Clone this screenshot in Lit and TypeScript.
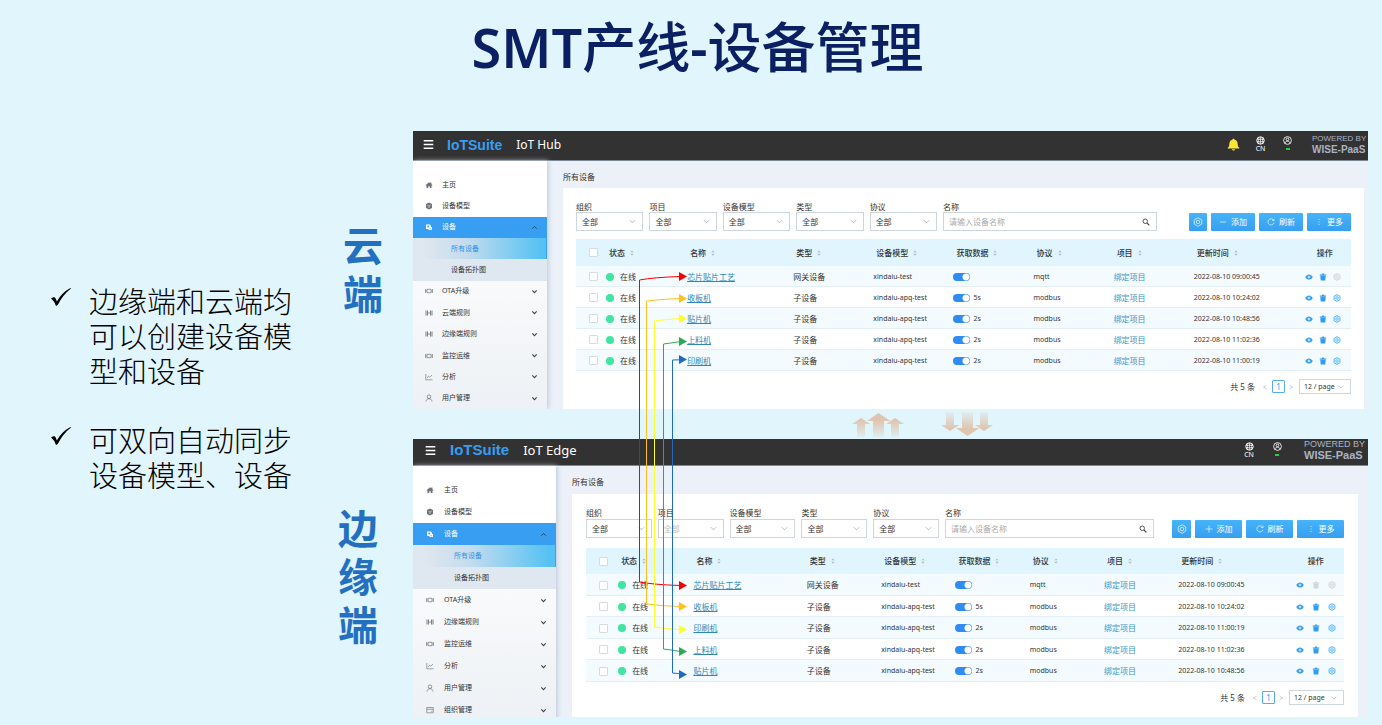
import { LitElement, html, css, svg, nothing } from "lit";
import { customElement, property } from "lit/decorators.js";
import { classMap } from "lit/directives/class-map.js";

interface Device {
  name: string;
  type: string;
  model: string;
  interval: string;
  protocol: string;
  updated: string;
}

interface MenuItem {
  text: string;
  icon: string;
  kind?: "plain" | "active" | "selected" | "sub";
}

const gateway: Device = { name: "芯片贴片工艺", type: "网关设备", model: "xindaiu-test", interval: "", protocol: "mqtt", updated: "2022-08-10 09:00:45" };
const child = (name: string, interval: string, time: string): Device => ({
  name, type: "子设备", model: "xindaiu-apq-test", interval, protocol: "modbus", updated: `2022-08-10 ${time}`,
});

const DEVICES: Record<string, Device[]> = {
  hub: [gateway, child("收板机", "5s", "10:24:02"), child("贴片机", "2s", "10:48:56"), child("上料机", "2s", "11:02:36"), child("印刷机", "2s", "11:00:19")],
  edge: [gateway, child("收板机", "5s", "10:24:02"), child("印刷机", "2s", "11:00:19"), child("上料机", "2s", "11:02:36"), child("贴片机", "2s", "10:48:56")],
};

const TOP_MENU: MenuItem[] = [
  { text: "主页", icon: "home", kind: "plain" },
  { text: "设备模型", icon: "cube", kind: "plain" },
  { text: "设备", icon: "device", kind: "active" },
  { text: "所有设备", icon: "", kind: "selected" },
  { text: "设备拓扑图", icon: "", kind: "sub" },
  { text: "OTA升级", icon: "ota" },
];

const MENUS: Record<string, MenuItem[]> = {
  hub: [...TOP_MENU, { text: "云端规则", icon: "rule" }, { text: "边缘端规则", icon: "rule" }, { text: "监控运维", icon: "ota" }, { text: "分析", icon: "chart" }, { text: "用户管理", icon: "user" }],
  edge: [...TOP_MENU, { text: "边缘端规则", icon: "rule" }, { text: "监控运维", icon: "ota" }, { text: "分析", icon: "chart" }, { text: "用户管理", icon: "user" }, { text: "组织管理", icon: "card" }],
};

const FILTERS = ["组织", "项目", "设备模型", "类型", "协议"];
const COLUMNS = ["状态", "名称", "类型", "设备模型", "获取数据", "协议", "项目", "更新时间"];

const HEXAGON = "M8 1.2 14 4.6V11.4L8 14.8 2 11.4V4.6Z";

const SHAPES: Record<string, unknown> = {
  home: svg`<path fill="currentColor" d="M1 8.6 8 2.4l2.6 2.3V2.8h2.2v3.8L15 8.6l-1 1-1-.9V14H9.6v-3.6H6.6V14H3V8.7l-1 .9z"/>`,
  cube: svg`<path fill="currentColor" d="M8 1l6 3.200v7.600L8 15l-6-3.200V4.200z"/><path d="M4.600 6.200 8 8l3.400-1.800M8 8v4" stroke="#fff" stroke-width="1" fill="none"/>`,
  device: svg`<path fill="currentColor" d="M2 3h8l2 3v2h2v6H7v-2H2z"/><circle cx="6.4" cy="7" r="2" fill="#379ef1"/><path d="M9 11.5h3.6" stroke="#379ef1" stroke-width="1.4"/>`,
  ota: svg`<path d="M1.2 4v8M14.8 4v8M4 4.6h8v6.8H4z" stroke="currentColor" stroke-width="1.4" fill="none"/><path d="M1.2 8H4M12 8h2.8" stroke="currentColor"/>`,
  rule: svg`<path d="M2 3v10M5 3v10M11 3v10M14 3v10" stroke="currentColor" stroke-width="1.8"/><path d="M5 8h6" stroke="currentColor" stroke-width="1.4"/>`,
  chart: svg`<path d="M1.6 2v11.6H15M4 10l3-3.6 2.6 2L14 4" stroke="currentColor" stroke-width="1.3" fill="none"/>`,
  user: svg`<circle cx="8" cy="5.4" r="3.6" stroke="currentColor" stroke-width="1.4" fill="none"/><path d="M2 15c.4-3.6 2.6-5.6 6-5.6s5.6 2 6 5.6" stroke="currentColor" stroke-width="1.4" fill="none"/>`,
  card: svg`<path d="M1.5 3h13v10.5h-13zM1.5 6.5h13M10.5 10.5h2.5" stroke="currentColor" stroke-width="1.3" fill="none"/>`,
  down: svg`<path d="M3 5.5 8 10.5l5-5" stroke="currentColor" stroke-width="2.6" fill="none"/>`,
  up: svg`<path d="M3 10.5 8 5.5l5 5" stroke="currentColor" stroke-width="2.2" fill="none"/>`,
  thinDown: svg`<path d="M2 5l6 6 6-6" stroke="currentColor" stroke-width="1.7" fill="none"/>`,
  left: svg`<path d="M12 3 4 8l8 5" stroke="currentColor" stroke-width="1.6" fill="none"/>`,
  right: svg`<path d="M4 3l8 5-8 5" stroke="currentColor" stroke-width="1.6" fill="none"/>`,
  search: svg`<circle cx="6.5" cy="6.5" r="4.5" stroke="currentColor" stroke-width="1.8" fill="none"/><path d="M10 10l4.6 4.6" stroke="currentColor" stroke-width="2.2"/>`,
  gear: svg`<path d=${HEXAGON} stroke="currentColor" stroke-width="1.3" fill="none"/><circle cx="8" cy="8" r="2.8" stroke="currentColor" stroke-width="1.3" fill="none"/>`,
  gearSoft: svg`<path d=${HEXAGON} stroke="currentColor" stroke-width="2" fill="currentColor" fill-opacity=".25"/><circle cx="8" cy="8" r="2.6" stroke="currentColor" stroke-width="1.6" fill="none"/>`,
  minus: svg`<path d="M2 8h12" stroke="currentColor" stroke-width="1.6"/>`,
  plus: svg`<path d="M1 8h14M8 1v14" stroke="currentColor" stroke-width="1.5"/>`,
  reload: svg`<path d="M13.4 4.6A6.2 6.2 0 1 0 14 9.6M14 1.6v3.6h-3.6" stroke="currentColor" stroke-width="1.5" fill="none"/>`,
  dots: svg`<path d="M8 2v2M8 7v2M8 12v2" stroke="currentColor" stroke-width="1.6"/>`,
  eye: svg`<path fill="currentColor" d="M.5 8C2.5 4.4 5 2.8 8 2.8S13.5 4.4 15.5 8C13.5 11.6 11 13.2 8 13.2S2.5 11.600.5 8z"/><circle cx="8" cy="8" r="2.6" fill="#fff"/><circle cx="8" cy="8" r="1.4" fill="currentColor"/>`,
  trash: svg`<path fill="currentColor" d="M1.5 3h4l1-2h3l1 2h4v2h-13zM2.6 5.6h10.8L12.6 15H3.4z"/>`,
  sort: svg`<path fill="currentColor" d="M8 1l4.5 5h-9zM8 15l4.5-5h-9z"/>`,
  menu: svg`<path d="M1 2.5h14M1 8h14M1 13.5h14" stroke="currentColor" stroke-width="2.2"/>`,
  bell: svg`<path fill="currentColor" d="M8 .8c.9 0 1.3.5 1.4 1.2 2.6.6 3.7 2.5 3.7 5 0 2.6.5 3.6 2 5v.9H.9V12c1.5-1.4 2-2.4 2-5 0-2.5 1.1-4.4 3.7-5C6.7 1.3 7.1.8 8 .8zM6 13.7h4c-.2 1.1-1 1.7-2 1.7s-1.8-.6-2-1.7z"/>`,
  globe: svg`<circle cx="8" cy="8" r="6.6" stroke="currentColor" stroke-width="1.7" fill="none"/><path d="M1.5 6h13M1.5 10h13M8 1.5v13M5.5 2.5c-1.6 3.5-1.6 7.5 0 11M10.5 2.5c1.6 3.5 1.6 7.5 0 11" stroke="currentColor" stroke-width="1.2" fill="none"/>`,
  person: svg`<circle cx="8" cy="8" r="6.9" stroke="currentColor" stroke-width="1.5" fill="none"/><circle cx="8" cy="6" r="2.3" stroke="currentColor" stroke-width="1.5" fill="none"/><path d="M3.6 13c.5-2.6 2-3.9 4.4-3.9s3.9 1.3 4.4 3.9" stroke="currentColor" stroke-width="1.5" fill="none"/>`,
};

const icon = (name: string, cls = "") => html`<svg class="icon ${cls}" viewBox="0 0 16 16" aria-hidden="true">${SHAPES[name] ?? nothing}</svg>`;

@customElement("device-panel")
export class DevicePanel extends LitElement {
  @property({ reflect: true }) variant = "hub";

  static styles = css`
    :host {
      --side: 134px;
      --bar: 30px;
      --bar-lift: 2px;
      --crumb: 27px;
      --card-left: 16px;
      --card-right: 4px;
      --pad: 13px;
      --filters: 361px;
      --label: 10px;
      --table-gap: 8px;
      --head: 27px;
      --row-odd: 21px;
      --bottom: 15px;
      --button: 44px;
      --small-button: 18px;
      --search-gap: 32px;
      --op-gap: 6px;
      display: block;
      overflow: hidden;
      background: #ecf1f9;
      color: #333;
      font: 8px/10px "Noto Sans", "Noto Sans CJK SC", sans-serif;
    }
    :host([variant="edge"]) {
      --side: 143px;
      --bar: 27px;
      --bar-lift: 4px;
      --crumb: 28px;
      --card-right: 10px;
      --pad: 14px;
      --filters: 353px;
      --label: 11px;
      --table-gap: 10px;
      --head: 26px;
      --row-odd: 22px;
      --bottom: 12px;
      --button: 47px;
      --small-button: 19px;
      --search-gap: 18px;
      --op-gap: 8px;
    }
    * { box-sizing: border-box; }
    a { color: inherit; text-decoration: none; }
    button, input, select { font: inherit; color: inherit; margin: 0; padding: 0; }
    .icon { display: block; width: 8px; height: 8px; flex: none; }

    .bar {
      display: flex;
      align-items: center;
      height: var(--bar);
      padding: 0 0 var(--bar-lift) 9px;
      background: #333232;
      border-bottom: 1px solid #7c8894;
      color: #fff;
      white-space: nowrap;
    }
    .burger { border: 0; background: none; display: block; padding: 0 1px; }
    .burger .icon { width: 11px; height: 11px; }
    .brand {
      margin-left: 12px;
      color: #379ef1;
      font: bold 14px/20px "Liberation Sans", sans-serif;
    }
    .product { margin-left: 14px; font-size: 12px; line-height: 20px; flex: 1; }
    :host([variant="edge"]) .burger { margin-left: 2px; }
    :host([variant="edge"]) .brand { margin-left: 13px; font-size: 15px; }
    :host([variant="edge"]) .product { font-size: 13px; }
    .status { display: flex; flex-direction: column; align-items: center; width: 27px; font-size: 7px; line-height: 8px; }
    .status .icon { width: 9px; height: 9px; }
    .bell { color: #f9e532; }
    .bell .icon { width: 13px; height: 13px; }
    .online { width: 4px; height: 2px; margin: 3px 0; background: #1fd13a; }
    .powered { width: 56px; margin-left: 11px; color: #a9b2c4; font: 8px/10px "Liberation Sans", sans-serif; }
    .powered strong { display: block; font: bold 10px/12px "Liberation Sans", sans-serif; }
    :host([variant="edge"]) .powered { width: 64px; margin-left: 13px; font-size: 9px; }
    :host([variant="edge"]) .status { width: 28px; }
    :host([variant="edge"]) .powered strong { font-size: 11px; }

    .body { display: flex; }
    .side {
      position: relative;
      z-index: 1;
      display: flex;
      flex-direction: column;
      flex: none;
      width: var(--side);
      padding-top: 13px;
      background: linear-gradient(#fff 0 20%, #edf1f5);
      box-shadow: 1px 0 5px #b9c5d5;
      font-size: 7px;
    }
    :host([variant="edge"]) .side { margin-bottom: -4px; }
    .item { display: flex; align-items: center; flex: 1; padding: 0 9px 0 12px; }
    .item span { margin-left: 9px; flex: 1; }
    .item .icon { color: #6d7378; }
    .item .caret { color: #444; width: 7px; height: 7px; }
    :host([variant="edge"]) .item { padding-left: 13px; }
    :host([variant="edge"]) .item span { margin-left: 10px; }
    .item.active { background: #379ef1; color: #fff; }
    .item.active .icon { color: #fff; }
    .item.active .caret { color: #17466f; }
    .item.sub, .item.selected { background: #dfe7f0; }
    .item.sub span, .item.selected span { margin-left: 26px; }
    :host([variant="edge"]) .item.sub span, :host([variant="edge"]) .item.selected span { margin-left: 28px; }
    .item.selected {
      background: linear-gradient(90deg, #dfe7f0 8%, #c4dcee 40%, #55c2f3 96%);
      border-right: 1px solid #379ef1;
      color: #2b92e6;
    }

    .main { flex: 1; min-width: 0; padding: 0 var(--card-right) 0 var(--card-left); }
    .crumb { margin: 0; height: var(--crumb); padding-top: 11px; font: inherit; }
    .card { background: #fff; padding: 14px var(--pad) var(--bottom); }
    .tools { display: flex; align-items: flex-end; margin-bottom: var(--table-gap); }
    .filters { display: flex; gap: 6px; width: var(--filters); }
    .field { display: block; flex: 1; min-width: 0; }
    .field > span { display: block; height: var(--label); line-height: 9px; }
    .control {
      display: flex;
      align-items: center;
      height: 19px;
      border: 1px solid #cdd6dd;
      position: relative;
    }
    .control select, .control input {
      appearance: none;
      border: 0;
      outline: 0;
      background: none;
      width: 100%;
      height: 100%;
      padding-left: 5px;
      border-radius: 0;
    }
    .control input::placeholder { color: #aaa; opacity: 1; }
    .control select:disabled { color: #bbb; opacity: 1; }
    .control .icon { position: absolute; right: 6px; width: 7px; height: 7px; color: #a5a5a5; pointer-events: none; }
    .search { margin: 0 var(--search-gap) 0 6px; }
    .search .icon { width: 8px; height: 8px; color: #444; }
    .actions { display: flex; gap: 4px; }
    .actions button {
      display: flex;
      align-items: center;
      justify-content: center;
      gap: 4px;
      width: var(--button);
      height: 18px;
      border: 0;
      border-radius: 1px;
      background: linear-gradient(#45b4fa, #379ff0);
      color: #fff;
    }
    .actions button.square { width: var(--small-button); }
    .actions .icon { opacity: .85; }
    .actions .square .icon { width: 10px; height: 10px; }

    table { width: 100%; table-layout: fixed; border-collapse: collapse; }
    th, td { padding: 0; text-align: left; white-space: nowrap; }
    thead tr { height: var(--head); background: #e0f5fd; }
    th { font-weight: 500; padding-left: 3px; }
    th > span { display: flex; align-items: center; gap: 4px; }
    th .icon { width: 6px; height: 8px; color: #b3bcc2; }
    tbody tr { height: 21px; box-shadow: inset 0 -1px #e3eef5; }
    tbody tr:nth-child(odd) { height: var(--row-odd); background: #f3fbff; }
    .c-check { width: 30px; } .c-state { width: 81px; } .c-name { width: 106px; }
    .c-mid { width: 80px; } .c-time { width: 111px; } .c-ops { width: 46px; }
    :host([variant="edge"]) .c-check { width: 32px; }
    :host([variant="edge"]) .c-state { width: 75px; }
    :host([variant="edge"]) .c-name { width: 113px; }
    :host([variant="edge"]) .c-mid { width: 74px; }
    :host([variant="edge"]) .c-time { width: 117px; }
    :host([variant="edge"]) .c-ops { width: 48px; }
    th:first-child, td:first-child { padding-left: 13px; }
    th:last-child { padding-left: 12px; }
    input[type="checkbox"] { appearance: none; display: block; width: 9px; height: 9px; border: 1px solid #d6dbdf; border-radius: 1px; background: #fff; }
    .state { display: flex; align-items: center; gap: 6px; }
    .state::before { content: ""; width: 8px; height: 8px; border-radius: 50%; background: #3ee6a0; }
    .name { color: #2f87b5; text-decoration: underline; }
    .bind { color: #3d94c4; }
    .latin { font-size: 7px; }
    .fetch { display: flex; align-items: center; gap: 3px; font-size: 7px; }
    .fetch input[type="checkbox"] { width: 17px; height: 8px; border: 0; border-radius: 4px; background: radial-gradient(circle at 13px 4px, #fff 3px, #2f8cf5 4px); }
    .ops { display: flex; gap: var(--op-gap); color: #2f9df2; }
    .ops button { border: 0; background: none; display: block; }
    .ops .icon { width: 8px; height: 8px; }
    .ops .last { color: #5cbcf7; }
    .ops button:disabled { color: #d3d6d8; }

    .pager { display: flex; align-items: center; justify-content: flex-end; margin-top: 8px; }
    .pager button { border: 0; background: none; color: #aaa; }
    .pager .icon { width: 6px; height: 8px; }
    .pager .step { margin: 0 4px 0 7px; }
    .pager .step.next { margin: 0 5px 0 3px; }
    .pager .page { width: 13px; height: 13px; border: 1px solid #55aef5; border-radius: 1px; color: #379ef1; line-height: 9px; background: #fff; }
    .pager .control { width: 52px; height: 15px; font-size: 7px; }
    .pager .control select { padding-left: 4px; }
    :host([variant="edge"]) .pager .control { width: 55px; }
  `;

  private menuItem(item: MenuItem) {
    const kind = item.kind ?? "group";
    return html`<a href="#" class="item ${kind}">
      ${item.icon ? icon(item.icon) : nothing}<span>${item.text}</span>
      ${kind === "active" ? icon("up", "caret") : kind === "group" ? icon("down", "caret") : nothing}
    </a>`;
  }

  private row(d: Device, index: number) {
    const first = index === 0;
    return html`<tr>
      <td><input type="checkbox" aria-label=${d.name} /></td>
      <td><span class="state">在线</span></td>
      <td><a href="#" class="name">${d.name}</a></td>
      <td>${d.type}</td>
      <td class="latin">${d.model}</td>
      <td><label class="fetch"><input type="checkbox" aria-label="获取数据" checked />${d.interval}</label></td>
      <td class="latin">${d.protocol}</td>
      <td><a href="#" class="bind">绑定项目</a></td>
      <td class="latin">${d.updated}</td>
      <td><div class="ops">
        <button aria-label="查看">${icon("eye")}</button>
        <button aria-label="删除" ?disabled=${first && this.variant === "edge"}>${icon("trash")}</button>
        <button aria-label="设置" class="last" ?disabled=${first}>${icon("gearSoft")}</button>
      </div></td>
    </tr>`;
  }

  render() {
    const hub = this.variant === "hub";
    return html`
      <header class="bar">
        <button class="burger" aria-label="菜单">${icon("menu")}</button>
        <span class="brand">IoTSuite</span>
        <span class="product">${hub ? "IoT Hub" : "IoT Edge"}</span>
        ${hub ? html`<span class="status bell">${icon("bell")}</span>` : nothing}
        <span class="status">${icon("globe")}CN</span>
        <span class="status">${icon("person")}<i class="online"></i></span>
        <span class="powered">POWERED BY<strong>WISE-PaaS</strong></span>
      </header>
      <div class="body">
        <nav class="side">${MENUS[this.variant].map((m) => this.menuItem(m))}</nav>
        <section class="main">
          <h2 class="crumb">所有设备</h2>
          <div class="card">
            <div class="tools">
              <div class="filters">
                ${FILTERS.map((f, i) => html`<label class="field"><span>${f}</span>
                  <div class="control"><select ?disabled=${!hub && i === 1}><option>全部</option></select>${icon("thinDown")}</div></label>`)}
              </div>
              <label class="field search"><span>名称</span>
                <div class="control"><input type="text" placeholder="请输入设备名称" />${icon("search")}</div></label>
              <div class="actions">
                <button class="square" aria-label="设置">${icon("gear")}</button>
                <button>${icon(hub ? "minus" : "plus")}添加</button>
                <button>${icon("reload")}刷新</button>
                <button>${icon("dots")}更多</button>
              </div>
            </div>
            <table>
              <colgroup>
                <col class="c-check" /><col class="c-state" /><col class="c-name" />
                ${[1, 2, 3, 4, 5].map(() => html`<col class="c-mid" />`)}
                <col class="c-time" /><col class="c-ops" />
              </colgroup>
              <thead><tr>
                <th><input type="checkbox" aria-label="全选" /></th>
                ${COLUMNS.map((c) => html`<th><span>${c}${icon("sort")}</span></th>`)}
                <th>操作</th>
              </tr></thead>
              <tbody>${DEVICES[this.variant].map((d, i) => this.row(d, i))}</tbody>
            </table>
            <div class="pager">
              <span>共 5 条</span>
              <button class="step" aria-label="上一页">${icon("left")}</button>
              <button class="page">1</button>
              <button class=${classMap({ step: true, next: true })} aria-label="下一页">${icon("right")}</button>
              <div class="control"><select aria-label="每页条数"><option>12 / page</option></select>${icon("thinDown")}</div>
            </div>
          </div>
        </section>
      </div>`;
  }
}

interface Link { color: string; x: number; tipTop: number; top: number; bottom: number; tipBottom: number; }

const LINKS: Link[] = [
  { color: "#f80000", x: 226.5, tipTop: 145.5, top: 149, bottom: 451, tipBottom: 454.5 },
  { color: "#ffc020", x: 233.5, tipTop: 167.5, top: 170, bottom: 473, tipBottom: 475.5 },
  { color: "#ffff30", x: 241.5, tipTop: 187.5, top: 190, bottom: 496, tipBottom: 498.5 },
  { color: "#27ae50", x: 250.5, tipTop: 210.5, top: 213, bottom: 518, tipBottom: 520.5 },
  { color: "#1f6bc4", x: 259.5, tipTop: 228.5, top: 229, bottom: 542, tipBottom: 543.5 },
];

@customElement("app-root")
export class AppRoot extends LitElement {
  static styles = css`
    :host {
      display: block;
      min-height: 100vh;
      background: #e0f5fc;
      color: #000;
      font-family: "Noto Sans", "Noto Sans CJK SC", sans-serif;
    }
    * { box-sizing: border-box; }
    .title {
      margin: 0;
      padding: 0 0 37px 13px;
      color: #0b1f63;
      text-align: center;
      font: 500 54px/94px "Noto Sans", "Noto Sans CJK SC", sans-serif;
    }
    .title .latin { font-weight: 600; }
    .board { display: grid; grid-template-columns: 338px 75px minmax(0, 1fr); padding-right: 14px; }
    .notes { margin: 0; padding: 152px 0 0 51px; list-style: none; }
    .notes li { display: flex; gap: 18px; margin-bottom: 34px; font: 300 29px/35px "Noto Sans CJK SC", sans-serif; }
    .notes p { margin: 0; width: 206px; }
    .check { width: 20px; height: 19px; flex: none; margin-top: 5px; }
    .sides { display: flex; flex-direction: column; }
    .side-name { margin: 0; width: 40px; color: #2470c0; font: bold 40px/48px "Noto Sans CJK SC", sans-serif; word-break: break-all; }
    .cloud { margin: 89px 0 187px 5px; }
    .stack { position: relative; }
    .sync { display: flex; gap: 37px; height: 30px; padding: 3px 0 0 439px; }
    .arrows { width: 52px; height: 25px; }
    .links { position: absolute; left: 0; top: 0; width: 290px; height: 586px; z-index: 2; pointer-events: none; }
  `;

  private check() {
    return html`<svg class="check" viewBox="0 0 20 19" aria-hidden="true"><path d="M0 10.3 3.2 9Q5 10 5.8 13.4 11 4.5 19.4 0L20 .5Q12 6.500 6.800 17L5 18Q3.200 13 0 10.300Z" /></svg>`;
  }

  private arrows(id: string, down: boolean) {
    const shapes = svg`
      <path d="M9 5 18 11H13V24H5V11H0Z" />
      <path d="M26.5 0 38.5 8H32V24H21V8H15Z" />
      <path d="M43 5 52 11H47V24H39V11H34Z" />`;
    return html`<svg class="arrows" viewBox="0 0 52 25" aria-hidden="true">
      <defs><linearGradient id=${id} gradientUnits="userSpaceOnUse" x1="0" y1="0" x2="0" y2="25">
        <stop offset="0.3" stop-color="#dfc5b0" /><stop offset="1" stop-color="#dfc5b0" stop-opacity="0.1" />
      </linearGradient></defs>
      <g fill="url(#${id})" transform=${down ? "matrix(1 0 0 -1 0 24)" : "matrix(1 0 0 1 0 1)"}>${shapes}</g>
    </svg>`;
  }

  private link(l: Link) {
    const bend = (from: number, tip: number) => `M${l.x} ${from}Q${l.x + 14} ${(from + tip * 3) / 4} 267 ${tip}`;
    const head = (y: number) => `M266 ${y - 4.5}L274 ${y}L266 ${y + 4.5}Z`;
    return svg`<g stroke=${l.color} fill="none">
      <path d="M${l.x} ${l.top}V${l.bottom}" />
      <path d=${bend(l.top, l.tipTop)} /><path d=${bend(l.bottom, l.tipBottom)} />
      <path stroke="none" fill=${l.color} d="${head(l.tipTop)}${head(l.tipBottom)}" />
    </g>`;
  }

  render() {
    return html`
      <h1 class="title"><span class="latin">SMT</span>产线<span class="latin">-</span>设备管理</h1>
      <div class="board">
        <ul class="notes">
          <li>${this.check()}<p>边缘端和云端均可以创建设备模型和设备</p></li>
          <li>${this.check()}<p>可双向自动同步设备模型、设备</p></li>
        </ul>
        <div class="sides">
          <h2 class="side-name cloud">云端</h2>
          <h2 class="side-name">边缘端</h2>
        </div>
        <div class="stack">
          <device-panel variant="hub"></device-panel>
          <div class="sync">${this.arrows("fade-up", false)}${this.arrows("fade-down", true)}</div>
          <device-panel variant="edge"></device-panel>
          <svg class="links" viewBox="0 0 290 586" aria-hidden="true">${LINKS.map((l) => this.link(l))}</svg>
        </div>
      </div>`;
  }
}
